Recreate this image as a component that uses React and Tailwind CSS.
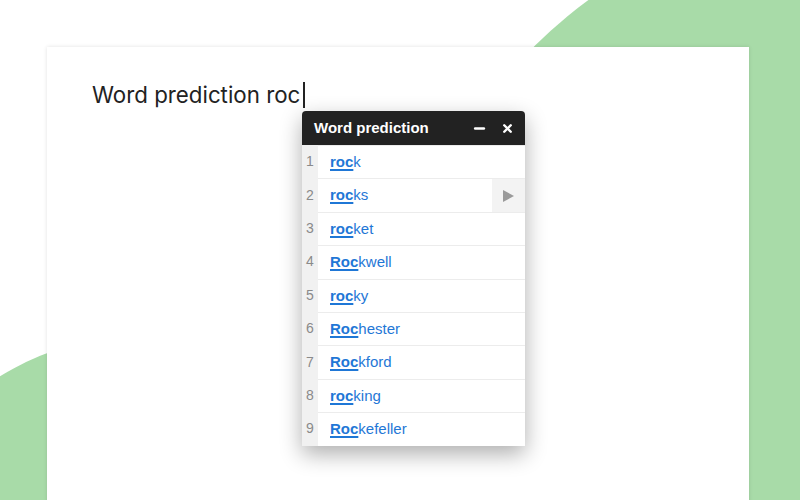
import { Minus, X } from 'lucide-react'

const words = [
  { prefix: 'roc', rest: 'k' },
  { prefix: 'roc', rest: 'ks', active: true },
  { prefix: 'roc', rest: 'ket' },
  { prefix: 'Roc', rest: 'kwell' },
  { prefix: 'roc', rest: 'ky' },
  { prefix: 'Roc', rest: 'hester' },
  { prefix: 'Roc', rest: 'kford' },
  { prefix: 'roc', rest: 'king' },
  { prefix: 'Roc', rest: 'kefeller' },
]

function PredictionRow({ index, word }) {
  return (
    <div className="flex h-[33.4px]">
      <div className="w-4 bg-[#f1f1f1] flex items-center justify-center text-[14px] text-[#8a8a8a]">
        {index}
      </div>
      <div className="flex-1 flex border-t border-[#ececec] first:border-t-0">
        <div className="flex-1 flex items-center pl-3 text-[15px] text-[#1f77d6]">
          <span className="font-bold underline underline-offset-[2px] decoration-[1.5px]">{word.prefix}</span>
          <span>{word.rest}</span>
        </div>
        {word.active && (
          <div className="w-[33px] bg-[#f3f3f3] flex items-center justify-center">
            <svg width="11" height="12" viewBox="0 0 11 12">
              <path d="M0 0 L11 6 L0 12 Z" fill="#9a9a9a" />
            </svg>
          </div>
        )}
      </div>
    </div>
  )
}

export default function App() {
  return (
    <div className="relative w-[800px] h-[500px] overflow-hidden bg-white">
      {/* background blobs */}
      <div className="absolute left-[403px] top-[-86px] w-[900px] h-[900px] rounded-full bg-[#a8dba8]" />
      <div className="absolute left-[-145px] top-[333px] w-[600px] h-[600px] rounded-full bg-[#a8dba8]" />

      <div className="relative ml-[47px] mt-[47px] w-[702px] h-[470px] bg-white shadow-[0_0_4px_rgba(0,0,0,0.12)] pt-[79px] pl-[45px]" style={{ fontFamily: 'Inter, sans-serif' }}>
        <div className="absolute left-[45px] top-[35px] flex items-center text-[22.3px] text-[#222] leading-none">
          <span>Word prediction roc</span>
          <span className="ml-[3px] w-[1.5px] h-[26px] bg-[#222]" />
        </div>

        <div
          className="ml-[210px] mt-[-15px] w-[223px] rounded-t-[4px] bg-white shadow-[0_8px_22px_rgba(0,0,0,0.32)]"
          style={{ fontFamily: '"Liberation Sans", Arial, sans-serif' }}
        >
          <div className="h-[34px] bg-[#222222] rounded-t-[4px] flex items-center pl-3 pr-[11px] text-white">
            <span className="flex-1 font-bold text-[15px]">Word prediction</span>
            <Minus className="w-[15px] h-[15px] mr-[14px]" strokeWidth={4} />
            <X className="w-[13px] h-[13px]" strokeWidth={4.5} />
          </div>
          <div className="flex flex-col">
            {words.map((w, i) => (
              <PredictionRow key={i} index={i + 1} word={w} />
            ))}
          </div>
        </div>
      </div>
    </div>
  )
}
